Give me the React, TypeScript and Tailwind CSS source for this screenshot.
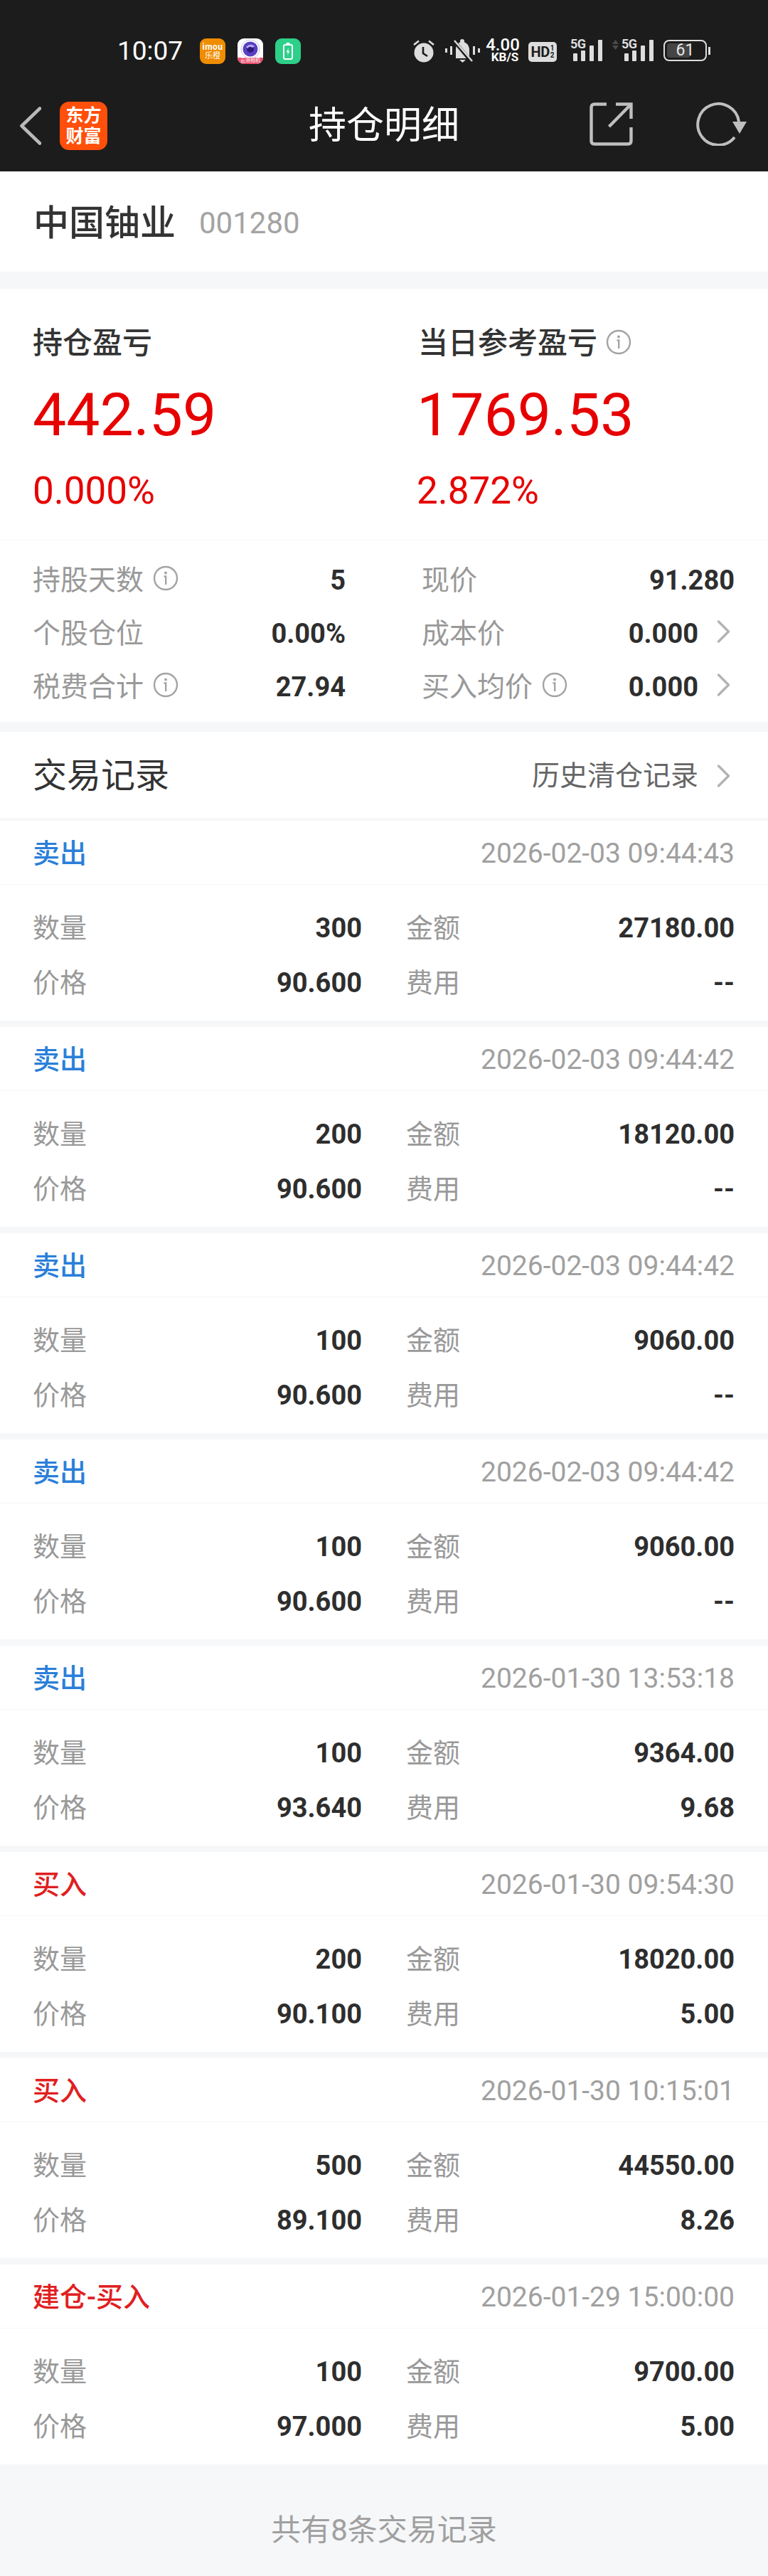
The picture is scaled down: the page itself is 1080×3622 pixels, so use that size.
import React from "react";

type Rec = { type: string; color: string; time: string; qty: string; amt: string; price: string; fee: string };
const BLUE = "text-[#2b7fd9]";
const RED = "text-[#e02020]";
const records: Rec[] = [
  { type: "卖出", color: BLUE, time: "2026-02-03 09:44:43", qty: "300", amt: "27180.00", price: "90.600", fee: "--" },
  { type: "卖出", color: BLUE, time: "2026-02-03 09:44:42", qty: "200", amt: "18120.00", price: "90.600", fee: "--" },
  { type: "卖出", color: BLUE, time: "2026-02-03 09:44:42", qty: "100", amt: "9060.00", price: "90.600", fee: "--" },
  { type: "卖出", color: BLUE, time: "2026-02-03 09:44:42", qty: "100", amt: "9060.00", price: "90.600", fee: "--" },
  { type: "卖出", color: BLUE, time: "2026-01-30 13:53:18", qty: "100", amt: "9364.00", price: "93.640", fee: "9.68" },
  { type: "买入", color: RED, time: "2026-01-30 09:54:30", qty: "200", amt: "18020.00", price: "90.100", fee: "5.00" },
  { type: "买入", color: RED, time: "2026-01-30 10:15:01", qty: "500", amt: "44550.00", price: "89.100", fee: "8.26" },
  { type: "建仓-买入", color: RED, time: "2026-01-29 15:00:00", qty: "100", amt: "9700.00", price: "97.000", fee: "5.00" },
];

function Info() {
  return (
    <svg viewBox="0 0 36 36" className="w-[36px] h-[36px] shrink-0" fill="none">
      <circle cx="18" cy="18" r="16" stroke="#a3a3a3" strokeWidth="2.4" />
      <circle cx="18" cy="10.5" r="1.9" fill="#a3a3a3" />
      <path d="M15.5 15.5H18.2V27" stroke="#a3a3a3" strokeWidth="2.4" />
    </svg>
  );
}

function Chevron() {
  return (
    <svg viewBox="0 0 19 32" className="w-[19px] h-[32px] shrink-0" fill="none">
      <path d="M2.5 2L16.5 16L2.5 30" stroke="#b3b3b3" strokeWidth="3.4" strokeLinecap="round" strokeLinejoin="round" />
    </svg>
  );
}

function Signal({ arrows }: { arrows?: boolean }) {
  return (
    <div className="flex items-start">
      {arrows && (
        <svg viewBox="0 0 9 14" className="w-[9px] h-[14px] mt-[1px] mr-[4px]">
          <path d="M4.5 0L9 6H0Z" fill="#4a4a4a" />
          <path d="M4.5 14L9 8H0Z" fill="#4a4a4a" />
        </svg>
      )}
      <div className="relative w-[46px] h-[32px]">
        <span className="absolute left-0 top-[-3px] text-[18px] leading-[20px] font-bold text-[#dddddd] tracking-[-0.5px]">5G</span>
        <svg viewBox="0 0 46 32" className="w-[46px] h-[32px] absolute left-0 top-0">
          <rect x="4" y="20" width="6" height="11" rx="1" fill="#dddddd" />
          <rect x="15" y="16" width="6" height="15" rx="1" fill="#dddddd" />
          <rect x="27" y="9" width="6" height="22" rx="1" fill="#dddddd" />
          <rect x="39" y="1" width="6" height="30" rx="1" fill="#dddddd" />
        </svg>
      </div>
    </div>
  );
}

function StatusBar() {
  return (
    <div className="h-[112px] pt-[54px] pl-[165px] pr-[81px] flex items-start">
      <span className="text-[37px] leading-[36px] text-white w-[91px] whitespace-nowrap">10:07</span>
      <div className="ml-[25px] flex gap-[17px]">
        <div className="w-[36px] h-[36px] rounded-[9px] bg-[#f08c00] flex flex-col items-center justify-center text-white">
          <span className="text-[12px] leading-[12px] font-bold tracking-[0.5px]">imou</span>
          <span className="text-[11px] leading-[13px]">乐橙</span>
        </div>
        <div className="relative w-[36px] h-[36px] rounded-[9px] bg-white overflow-hidden">
          <svg viewBox="0 0 36 36" className="w-[36px] h-[36px]">
            <circle cx="18" cy="15" r="13" fill="none" stroke="#c9c6e6" strokeWidth="1" />
            <circle cx="18" cy="15" r="10.5" fill="#5a3fc4" />
            <circle cx="18" cy="15" r="5" fill="#2c1c7a" />
            <path d="M12 12Q18 6 24 11L21 13Q17 10 14 14Z" fill="#b9a9f2" />
          </svg>
          <div className="absolute left-0 right-0 bottom-0 h-[9px] bg-[#ea4d6e] flex items-center justify-center text-white text-[7px] leading-[9px] whitespace-nowrap">云测相机</div>
        </div>
        <div className="w-[36px] h-[36px] rounded-[9px] bg-[#2dd088] flex items-center justify-center">
          <svg viewBox="0 0 14 24" className="w-[14px] h-[24px]" fill="none">
            <rect x="4.5" y="0" width="5" height="2.5" fill="#ffffff" />
            <rect x="1" y="3" width="12" height="20" rx="2" stroke="#ffffff" strokeWidth="2" />
            <path d="M8 7L4.5 13.5H7L6 18L9.5 11.5H7Z" fill="#ffffff" />
          </svg>
        </div>
      </div>
      <div className="ml-auto flex items-start">
        <svg viewBox="0 0 30 33" className="w-[30px] h-[33px] mt-[1px]">
          <circle cx="15" cy="19" r="13.5" fill="#dddddd" />
          <path d="M14 11V20L20 24" stroke="#1c1c1c" strokeWidth="2.6" fill="none" />
          <path d="M1 8L8 2.5M29 8L22 2.5" stroke="#dddddd" strokeWidth="2.6" />
        </svg>
        <svg viewBox="0 0 49 35" className="w-[49px] h-[35px] ml-[15px]">
          <path d="M15 28V15Q15 6 24 4.5Q33 6 34 15V28Z" fill="#dddddd" />
          <circle cx="24" cy="4" r="3" fill="#dddddd" />
          <path d="M20 30H29L24.5 34Z" fill="#dddddd" />
          <path d="M12 3L37 33" stroke="#1c1c1c" strokeWidth="5" />
          <path d="M13 3L38 32" stroke="#dddddd" strokeWidth="2.4" />
          <rect x="0" y="14" width="3" height="6" fill="#dddddd" />
          <rect x="7" y="11" width="3" height="12" fill="#dddddd" />
          <rect x="39" y="11" width="3" height="12" fill="#dddddd" />
          <rect x="46" y="14" width="3" height="6" fill="#dddddd" />
        </svg>
        <div className="w-[52px] ml-[6px] flex flex-col items-center text-white font-medium mt-[-1px]">
          <span className="text-[24px] leading-[20px]">4.00</span>
          <span className="text-[17px] leading-[15px] ml-[6px] font-bold">KB/S</span>
        </div>
        <div className="ml-[10px] mt-[5px] w-[40px] h-[28px] rounded-[5px] bg-[#dddddd] flex items-center justify-center text-[#1c1c1c] font-bold">
          <span className="text-[20px] leading-[28px] tracking-[-0.5px]">HD</span>
          <div className="flex flex-col items-center ml-[1px]">
            <span className="text-[10px] leading-[10px]">1</span>
            <span className="text-[10px] leading-[10px]">2</span>
          </div>
        </div>
        <div className="ml-[19px] mt-[1px]"><Signal /></div>
        <div className="ml-[13px] mt-[1px]"><Signal arrows /></div>
        <div className="ml-[13px] mt-[2px] flex items-center">
          <div className="relative w-[61px] h-[30px] rounded-[8px] border-2 border-[#dddddd] p-[3px]">
            <div className="w-[33px] h-full rounded-[4px] bg-[#454545]" />
            <span className="absolute inset-0 flex items-center justify-center text-[23px] leading-[26px] text-[#e6e6e6]">61</span>
          </div>
          <div className="w-[3px] h-[11px] ml-[2px] bg-[#dddddd]" />
        </div>
      </div>
    </div>
  );
}

function NavBar() {
  return (
    <div className="relative h-[129px] flex items-center">
      <svg viewBox="0 0 31 54" className="w-[31px] h-[54px] ml-[27px] shrink-0" fill="none">
        <path d="M29 2.5L3.5 27L29 51.5" stroke="#b9b9b9" strokeWidth="4.6" strokeLinecap="round" strokeLinejoin="round" />
      </svg>
      <div className="ml-[26px] w-[67px] h-[68px] rounded-[13px] bg-[#ff4f0a] flex flex-col items-center justify-center text-white font-bold text-[25px] leading-[29px] shrink-0">
        <span>东方</span>
        <span>财富</span>
      </div>
      <div className="absolute left-0 right-0 top-0 bottom-0 flex items-center justify-center text-[53px] leading-[60px] text-white">持仓明细</div>
      <svg viewBox="0 0 61 61" className="absolute left-[829px] top-[32px] w-[61px] h-[61px]" fill="none">
        <path d="M24 2.5H7Q2.5 2.5 2.5 7V54Q2.5 58.5 7 58.5H54Q58.5 58.5 58.5 54V35" stroke="#bfbfbf" strokeWidth="4.4" />
        <path d="M37 2.5H58.5V23" stroke="#bfbfbf" strokeWidth="4.4" />
        <path d="M57 4L27.5 34" stroke="#bfbfbf" strokeWidth="4.4" />
      </svg>
      <svg viewBox="0 0 71 62" className="absolute left-[979px] top-[31px] w-[71px] h-[62px]" fill="none">
        <path d="M54 50A29 29 0 1 1 60 28" stroke="#bfbfbf" strokeWidth="4" />
        <path d="M51 28H71L61 45Z" fill="#bfbfbf" />
      </svg>
    </div>
  );
}

function Stat({ label, info, value, arrow }: { label: string; info?: boolean; value: string; arrow?: boolean }) {
  return (
    <div className="h-[75px] flex items-center">
      <span className="text-[39px] leading-[44px] text-[#999999] whitespace-nowrap">{label}</span>
      {info && <span className="ml-[13px] mt-[-6px]"><Info /></span>}
      <span className="ml-auto text-[38px] leading-[44px] font-bold text-[#2e2e2e]">{value}</span>
      {arrow && <span className="ml-[26px] mr-[6px] mt-[-6px]"><Chevron /></span>}
    </div>
  );
}

function Pair({ label, value }: { label: string; value: string }) {
  return (
    <div className="h-[77px] flex items-center">
      <span className="text-[38px] leading-[44px] text-[#999999]">{label}</span>
      <span className="ml-auto text-[38px] leading-[44px] font-bold text-[#2e2e2e]">{value}</span>
    </div>
  );
}

function Card({ r }: { r: Rec }) {
  return (
    <div className="bg-white h-[281px]">
      <div className="h-[90px] pt-[2px] border-b border-[#f7f7f7] flex items-center justify-between pl-[46px] pr-[47px]">
        <span className={`text-[38px] leading-[44px] font-medium ${r.color}`}>{r.type}</span>
        <span className="text-[39px] leading-[44px] text-[#a0a0a0]">{r.time}</span>
      </div>
      <div className="pt-[22px] pl-[46px] pr-[47px] grid grid-cols-[463px_462px] gap-x-[62px]">
        <Pair label="数量" value={r.qty} />
        <Pair label="金额" value={r.amt} />
        <Pair label="价格" value={r.price} />
        <Pair label="费用" value={r.fee} />
      </div>
    </div>
  );
}

export default function App() {
  return (
    <div className="w-[1080px] min-h-[3622px] bg-[#f6f7f9] font-['Roboto','Noto_Sans_CJK_SC',sans-serif]">
      <div className="bg-[#1c1c1c] h-[241px]">
        <StatusBar />
        <NavBar />
      </div>

      <div className="bg-white h-[141px] pt-[4px] flex items-center pl-[47px]">
        <span className="text-[50px] leading-[60px] text-[#333333] font-medium">中国铀业</span>
        <span className="ml-[33px] text-[42px] leading-[50px] text-[#a3a3a3]">001280</span>
      </div>

      <div className="mt-[24px] bg-white h-[609px]">
        <div className="h-[354px] border-b border-[#f7f7f7] pt-[57px] pl-[46px] flex">
          <div className="w-[542px]">
            <div className="text-[42px] leading-[40px] text-[#333333] font-medium">持仓盈亏</div>
            <div className="mt-[39px] text-[84px] leading-[84px] text-[#e60000]">442.59</div>
            <div className="mt-[34px] text-[53px] leading-[60px] text-[#e60000]">0.000%</div>
          </div>
          <div>
            <div className="flex items-center text-[42px] leading-[40px] text-[#333333] font-medium">
              当日参考盈亏
              <span className="ml-[12px] mt-[-4px]"><Info /></span>
            </div>
            <div className="mt-[39px] text-[84px] leading-[84px] text-[#e60000] ml-[-2px]">1769.53</div>
            <div className="mt-[34px] text-[53px] leading-[60px] text-[#e60000] ml-[-2px]">2.872%</div>
          </div>
        </div>
        <div className="pt-[18px] pl-[46px] pr-[47px] grid grid-cols-[440px_440px] gap-x-[107px]">
          <Stat label="持股天数" info value="5" />
          <Stat label="现价" value="91.280" />
          <Stat label="个股仓位" value="0.00%" />
          <Stat label="成本价" value="0.000" arrow />
          <Stat label="税费合计" info value="27.94" />
          <Stat label="买入均价" info value="0.000" arrow />
        </div>
      </div>

      <div className="mt-[14px] bg-white h-[121px] pt-[3px] flex items-center pl-[46px] pr-[53px]">
        <span className="text-[48px] leading-[56px] text-[#333333]">交易记录</span>
        <span className="ml-auto text-[39px] leading-[44px] text-[#666666]">历史清仓记录</span>
        <span className="ml-[26px]"><Chevron /></span>
      </div>

      <div className="mt-[4px] flex flex-col gap-[9px]">
        {records.map((r, i) => (
          <Card key={i} r={r} />
        ))}
      </div>

      <div className="pt-[72px] text-center text-[42px] leading-[42px] text-[#a0a0a0]">共有8条交易记录</div>
    </div>
  );
}
